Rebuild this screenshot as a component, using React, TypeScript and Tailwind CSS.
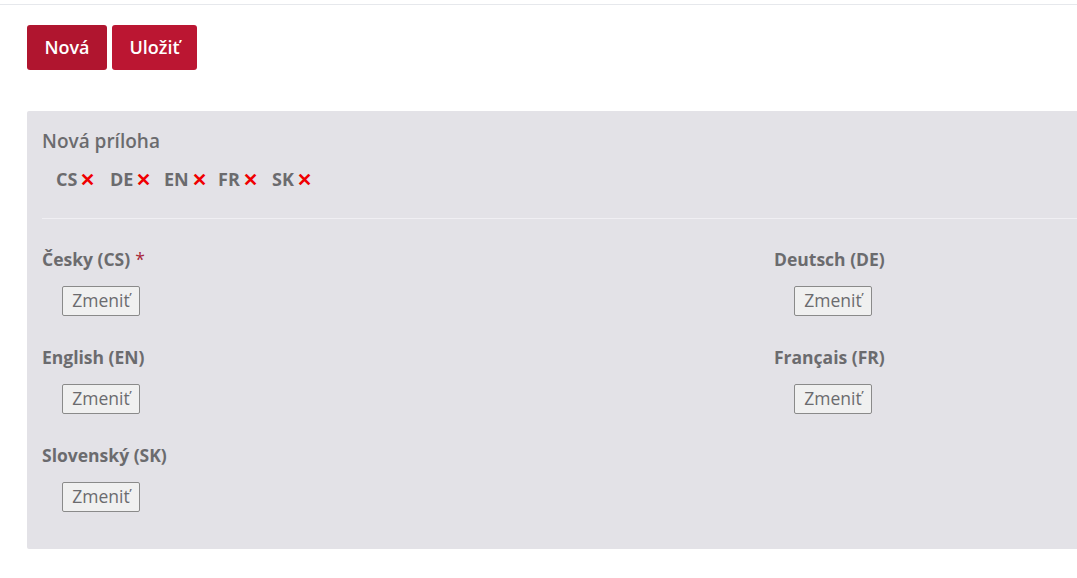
import React from "react";

const langs = [
  { label: "Česky (CS)", required: true },
  { label: "Deutsch (DE)" },
  { label: "English (EN)" },
  { label: "Français (FR)" },
  { label: "Slovenský (SK)" },
];

const tags = ["CS", "DE", "EN", "FR", "SK"];

const ChangeButton = () => (
  <button className="ml-5 mt-[15px] h-[30px] w-[78px] rounded-[2px] border border-[#8a8a8a] bg-[#f0f0f0] text-[17.5px] leading-none text-[#6b6b6e]">
    Zmeniť
  </button>
);

export default function App() {
  return (
    <div
      className="min-h-[578px] w-[1077px] overflow-hidden bg-white"
      style={{ fontFamily: '"Open Sans", "Liberation Sans", sans-serif' }}
    >
      {/* horná linka */}
      <div className="h-[5px] border-b border-[#e6e8ec]" />

      <div className="pl-[27px] pt-5">
        {/* tlačidlá */}
        <div className="flex gap-[5px]">
          <button className="h-[45px] w-[80px] rounded-[3px] bg-[#b0152f] text-[18px] font-semibold text-white">
            Nová
          </button>
          <button className="h-[45px] w-[85px] rounded-[3px] bg-[#bb1632] text-[18px] font-semibold text-white">
            Uložiť
          </button>
        </div>

        {/* panel prílohy */}
        <div className="mt-[41px] h-[438px] w-[1100px] rounded-l-[2px] bg-[#e3e2e7] pl-[15px] pt-[17px] text-[#6b6b6e]">
          <div className="text-[19px] font-semibold leading-[27px]">Nová príloha</div>

          <div className="mt-3 flex pl-[14px]">
            {tags.map((t) => (
              <span key={t} className="flex w-[54px] items-center text-[18px] font-bold leading-6">
                {t}
                <span className="ml-[3px] text-[18px] font-bold leading-none text-[#f00000]">✕</span>
              </span>
            ))}
          </div>

          <div className="mt-[27px] h-px bg-[#f0eff3]" />

          <div className="grid grid-cols-[732px_1fr] pt-[28px]">
            {langs.map((l, i) => (
              <div key={l.label} className={i >= 2 ? "mt-[29px]" : ""}>
                <div className="text-[17.5px] font-bold leading-6">
                  {l.label}
                  {l.required && <span className="ml-[5px] font-normal text-[#a8283a]">*</span>}
                </div>
                <ChangeButton />
              </div>
            ))}
          </div>
        </div>
      </div>
    </div>
  );
}
